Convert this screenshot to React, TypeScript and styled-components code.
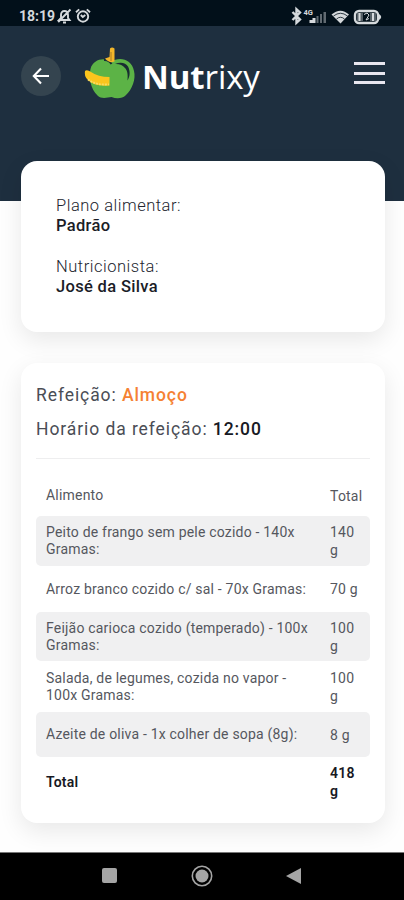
import React from "react";
import styled, { createGlobalStyle } from "styled-components";

const GlobalStyle = createGlobalStyle`
  * { box-sizing: border-box; }
  body { margin: 0; background: #fefefe; font-family: Roboto, "Liberation Sans", sans-serif; color: #4a4d55; }
`;

const Screen = styled.div`
  width: 404px;
  height: 900px;
  display: flex;
  flex-direction: column;
  overflow: hidden;
`;

const StatusBar = styled.div`
  height: 26px;
  flex: none;
  padding: 5px 20px 0 19px;
  display: flex;
  justify-content: space-between;
  background: #02101a;
  color: #d5d9dc;
`;

const StatusGroup = styled.div<{ $gap?: number }>`
  display: flex;
  height: 22px;
  align-items: center;
  gap: ${(p) => p.$gap ?? 0}px;
`;

const Clock = styled.span`
  width: 35px;
  font-size: 14px;
  font-weight: 700;
`;

const Header = styled.header`
  height: 175px;
  flex: none;
  padding: 20px 19px 0 21px;
  display: flex;
  align-items: flex-start;
  background: #1e2f3f;
`;

const BackButton = styled.button`
  width: 40px;
  height: 40px;
  margin-top: 10px;
  padding: 0;
  border: 0;
  border-radius: 50%;
  display: grid;
  place-items: center;
  background: #34444f;
  color: #fff;
`;

const Brand = styled.div`
  display: flex;
  margin-left: 23px;
  flex: 1;
`;

const BrandName = styled.div`
  margin: 9px 0 0 6px;
  font: 400 33px/44px "Open Sans", sans-serif;
  letter-spacing: -0.1px;
  color: #fff;
  white-space: nowrap;
  b { font-weight: 700; }
`;

const MenuButton = styled.button`
  width: 31px;
  height: 22px;
  margin-top: 16px;
  padding: 0;
  border: 0;
  background: none;
  display: flex;
  flex-direction: column;
  justify-content: space-between;
`;

const MenuLine = styled.span`
  height: 3px;
  background: #e9e7f0;
`;

const Content = styled.main`
  flex: 1;
  margin-top: -40px;
  padding: 0 19px 0 21px;
  display: flex;
  flex-direction: column;
  gap: 31px;
`;

const Card = styled.section`
  border-radius: 16px;
  background: #fff;
  box-shadow: 0 8px 24px rgba(0, 0, 0, 0.09);
`;

const PlanCard = styled(Card)`
  height: 171px;
  padding: 35px;
  display: flex;
  flex-direction: column;
  gap: 21px;
`;

const MealCard = styled(Card)`
  height: 460px;
  padding: 15px 15px 0;
`;

const Label = styled.div`
  font-size: 16.5px;
  line-height: 20px;
  letter-spacing: 0.52px;
  font-weight: 300;
  color: #22252e;
`;

const Value = styled.div`
  font-size: 16.5px;
  line-height: 20px;
  font-weight: 500;
  letter-spacing: 0.33px;
  color: #1b1d27;
`;

const MealLine = styled.div`
  height: 34px;
  font-size: 17.5px;
  line-height: 34px;
  letter-spacing: 0.92px;
`;

const Strong = styled.span<{ $accent?: boolean }>`
  font-weight: 500;
  color: ${(p) => (p.$accent ? "#f58133" : "#171923")};
`;

const Divider = styled.div`
  height: 1px;
  margin: 12px 0 16px;
  background: #eeeeef;
`;

const Row = styled.div<{ $height: number; $shaded?: boolean; $bold?: boolean }>`
  height: ${(p) => p.$height}px;
  padding-left: 10px;
  display: grid;
  grid-template-columns: 284px 34px;
  align-items: center;
  border-radius: 5px;
  background: ${(p) => (p.$shaded ? "#f0f0f1" : "transparent")};
  font-size: 14px;
  font-weight: ${(p) => (p.$bold ? 600 : 400)};
  color: ${(p) => (p.$bold ? "#171923" : "#55575e")};
`;

const Food = styled.span`
  line-height: 17px;
  letter-spacing: 0.2px;
  white-space: pre;
`;

const Amount = styled.span`
  line-height: 18px;
  letter-spacing: 0.2px;
  white-space: pre;
`;

const NavBar = styled.nav`
  height: 48px;
  flex: none;
  padding: 0 102px 2px 101px;
  border-top: 1px solid #777;
  background: #000;
  display: flex;
  align-items: center;
  justify-content: space-between;
`;

const foods = [
  { name: "Alimento", amount: "Total", height: 41 },
  { name: "Peito de frango sem pele cozido - 140x\nGramas:", amount: "140\ng", height: 50, shaded: true },
  { name: "Arroz branco cozido c/ sal - 70x Gramas:", amount: "70 g", height: 46 },
  { name: "Feijão carioca cozido (temperado) - 100x\nGramas:", amount: "100\ng", height: 49, shaded: true },
  { name: "Salada, de legumes, cozida no vapor -\n100x Gramas:", amount: "100\ng", height: 51 },
  { name: "Azeite de oliva - 1x colher de sopa (8g):", amount: "8 g", height: 45, shaded: true },
  { name: "Total", amount: "418\ng", height: 50, bold: true },
];

const BellOffIcon = () => (
  <svg width="15" height="16" viewBox="0 0 15 16" fill="none" stroke="currentColor" strokeWidth="1.9">
    <path d="M2 12h10.5l-1.500-2V7c0-2.500-1.300-4-3.500-4S4 4.500 4 7v3zM6 14.500h3M13.500 1.500 1.200 14" />
  </svg>
);

const AlarmIcon = () => (
  <svg width="16" height="16" viewBox="0 0 16 16" fill="none" stroke="currentColor" strokeWidth="1.900">
    <circle cx="8" cy="8.500" r="5.200" />
    <path d="M1 4.200 4.200 1.400M15 4.200l-3.200-2.800M5.800 7l2 2 2.500-2" />
  </svg>
);

const StatusIcons = () => (
  <svg width="93" height="20" viewBox="0 0 93 20" fill="currentColor">
    <path d="m1.500 6 7.500 7.500-3.500 3.300V3.200L9 6.500 1.500 14" fill="none" stroke="currentColor" strokeWidth="2.400" />
    <text x="12.500" y="9" fontSize="7.500" fontWeight="700" fontFamily="Roboto">4G</text>
    <path d="M18.500 17v-3h3v-2h3v5z" />
    <path d="M25.500 10h2v7h-2zM29 8h2v9h-2zM32.500 6h2.500v11h-2.500z" opacity=".45" />
    <path d="M40.500 8.500Q49.500 .8 58 8.500l-8.500 9z" />
    <path d="M42.500 10q7-5.500 14 0M45.500 13q4-3.500 8 0" fill="none" stroke="#02101a" strokeWidth=".8" />
    <rect x="64" y="5" width="23" height="12" rx="4" fill="none" stroke="currentColor" strokeWidth="2.400" />
    <path d="M66 7h6v8h-6zM79 7h6v8h-6z" opacity=".4" />
    <path d="M88 8q4.500 3 0 6zM67.500 7h2v8h-2zM81 7h2v8h-2z" />
    <path d="m73 8.500 3-1.500 2 2-3 5 3-1.500" fill="none" stroke="currentColor" />
  </svg>
);

const AppleLogo = () => (
  <svg width="52" height="54" viewBox="0 0 52 54">
    <path d="M27 16C21 11 9 13 6.500 23c-2 8 0 20 7 26.500 4 4 10 2 14 1.500 5 2 11 1.500 14-1.500 7-6 10.500-17 8.500-24.500C48 13 35 10 27 16Z" fill="#5cb346" />
    <path d="M31 18c5-2.500 11-1.500 13 2.500 2.500 5 2 10-.5 14 .5-6 0-10-2.500-12.500-2.500-3-5.500-4.300-10-4Z" fill="#192d32" />
    <path d="M20 14q5-.5 7.500 4" fill="none" stroke="#172d36" strokeWidth="2" />
    <path d="M26 2.500q2-2 4.500 0v13l-3 .8q-3 0-6.500-3.800l4.500-1.500z" fill="#f3b72a" />
    <path d="M27 6v9" fill="none" stroke="#a87d26" strokeWidth="1" />
    <path d="M1 25q2-2 6 1 7 5 18.500 5v8.500q-15 1.500-22-6Q0 30 1 25Z" fill="#fbc51d" />
    <path d="M4 33.500q8 6 21 4.800" fill="none" stroke="#f9dc62" strokeWidth="1.800" strokeDasharray="2 1" />
  </svg>
);

const ArrowIcon = () => (
  <svg width="18" height="18" viewBox="0 0 18 18" fill="none" stroke="currentColor" strokeWidth="2.100">
    <path d="M17 9H2M9 1.500 1.800 9 9 16.500" />
  </svg>
);

export default function App() {
  return (
    <Screen>
      <GlobalStyle />
      <StatusBar>
        <StatusGroup $gap={3}><Clock>18:19</Clock><BellOffIcon /><AlarmIcon /></StatusGroup>
        <StatusGroup><StatusIcons /></StatusGroup>
      </StatusBar>
      <Header>
        <BackButton aria-label="Voltar"><ArrowIcon /></BackButton>
        <Brand><AppleLogo /><BrandName><b>Nut</b>rixy</BrandName></Brand>
        <MenuButton aria-label="Menu"><MenuLine /><MenuLine /><MenuLine /></MenuButton>
      </Header>
      <Content>
        <PlanCard>
          <div><Label>Plano alimentar:</Label><Value>Padrão</Value></div>
          <div><Label>Nutricionista:</Label><Value>José da Silva</Value></div>
        </PlanCard>
        <MealCard>
          <MealLine>Refeição: <Strong $accent>Almoço</Strong></MealLine>
          <MealLine>Horário da refeição: <Strong>12:00</Strong></MealLine>
          <Divider />
          {foods.map((f, i) => (
            <Row key={i} $height={f.height} $shaded={f.shaded} $bold={f.bold}>
              <Food>{f.name}</Food>
              <Amount>{f.amount}</Amount>
            </Row>
          ))}
        </MealCard>
      </Content>
      <NavBar>
        <svg width="17" height="17" viewBox="0 0 17 17"><rect x="1" y="1" width="15" height="15" rx="2" fill="#a5a5a5" /></svg>
        <svg width="22" height="22" viewBox="0 0 22 22"><circle cx="11" cy="11" r="9.700" fill="none" stroke="#a5a5a5" strokeWidth="1.600" /><circle cx="11" cy="11" r="6.500" fill="#a5a5a5" /></svg>
        <svg width="17" height="18" viewBox="0 0 17 18"><path d="M1 9 16 1v16z" fill="#a5a5a5" /></svg>
      </NavBar>
    </Screen>
  );
}
